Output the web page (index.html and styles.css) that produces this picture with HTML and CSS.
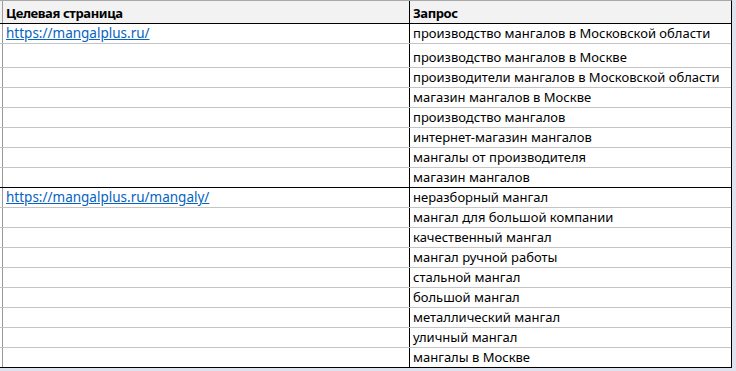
FILE: index.html
```html
<!DOCTYPE html>
<html lang="ru">
<head>
<meta charset="utf-8">
<title>Целевая страница</title>
<link rel="stylesheet" href="styles.css">
</head>
<body>
<div class="sheet">
  <div class="row head">
    <div class="gut"></div>
    <div class="c1">Целевая страница</div>
    <div class="c2">Запрос</div>
  </div>

  <div class="block">
    <div class="row"><div class="gut"></div><div class="c1"><a href="#">https://mangalplus.ru/</a></div><div class="c2">производство мангалов в Московской области</div></div>
    <div class="row tall"><div class="gut"></div><div class="c1"></div><div class="c2">производство мангалов в Москве</div></div>
    <div class="row"><div class="gut"></div><div class="c1"></div><div class="c2">производители мангалов в Московской области</div></div>
    <div class="row"><div class="gut"></div><div class="c1"></div><div class="c2">магазин мангалов в Москве</div></div>
    <div class="row"><div class="gut"></div><div class="c1"></div><div class="c2">производство мангалов</div></div>
    <div class="row"><div class="gut"></div><div class="c1"></div><div class="c2">интернет-магазин мангалов</div></div>
    <div class="row"><div class="gut"></div><div class="c1"></div><div class="c2">мангалы от производителя</div></div>
    <div class="row last"><div class="gut"></div><div class="c1"></div><div class="c2">магазин мангалов</div></div>
  </div>

  <div class="block">
    <div class="row"><div class="gut"></div><div class="c1"><a href="#">https://mangalplus.ru/mangaly/</a></div><div class="c2">неразборный мангал</div></div>
    <div class="row"><div class="gut"></div><div class="c1"></div><div class="c2">мангал для большой компании</div></div>
    <div class="row"><div class="gut"></div><div class="c1"></div><div class="c2">качественный мангал</div></div>
    <div class="row"><div class="gut"></div><div class="c1"></div><div class="c2">мангал ручной работы</div></div>
    <div class="row"><div class="gut"></div><div class="c1"></div><div class="c2">стальной мангал</div></div>
    <div class="row"><div class="gut"></div><div class="c1"></div><div class="c2">большой мангал</div></div>
    <div class="row"><div class="gut"></div><div class="c1"></div><div class="c2">металлический мангал</div></div>
    <div class="row"><div class="gut"></div><div class="c1"></div><div class="c2">уличный мангал</div></div>
    <div class="row last"><div class="gut"></div><div class="c1"></div><div class="c2">мангалы в Москве</div></div>
  </div>
</div>
</body>
</html>
```

FILE: styles.css
```css
html, body {
  margin: 0;
  padding: 0;
  background: #dee2ee;
}

.sheet {
  width: 731px;
  background: #ffffff;
  border-top: 1px solid #a8a8a8;
  border-right: 1px solid #000000;
  font-family: "Noto Sans", "Liberation Sans", Arial, sans-serif;
  font-size: 13px;
  color: #000000;
}

.row {
  display: flex;
  height: 19px;
  border-bottom: 1px solid #c4c4c4;
}

.row.tall {
  height: 23px;
}

.row.last {
  border-bottom-color: #000000;
}

.row.head {
  height: 22px;
  background: #f2f2f2;
  border-bottom: 1px solid #000000;
  font-weight: bold;
  letter-spacing: -0.4px;
}

.gut {
  width: 2px;
  flex: none;
}

.c1, .c2 {
  display: flex;
  align-items: flex-end;
  line-height: 17px;
  padding-bottom: 1px;
  white-space: nowrap;
  overflow: hidden;
}

.c1 {
  width: 403px;
  flex: none;
  border-left: 1px solid #9a9a9a;
  padding-left: 3px;
}

.c2 {
  flex: 1;
  border-left: 1px solid #000000;
  padding-left: 3px;
}

.c1 a {
  color: #0563c1;
  text-decoration: underline;
  font-size: 13.5px;
}
```
